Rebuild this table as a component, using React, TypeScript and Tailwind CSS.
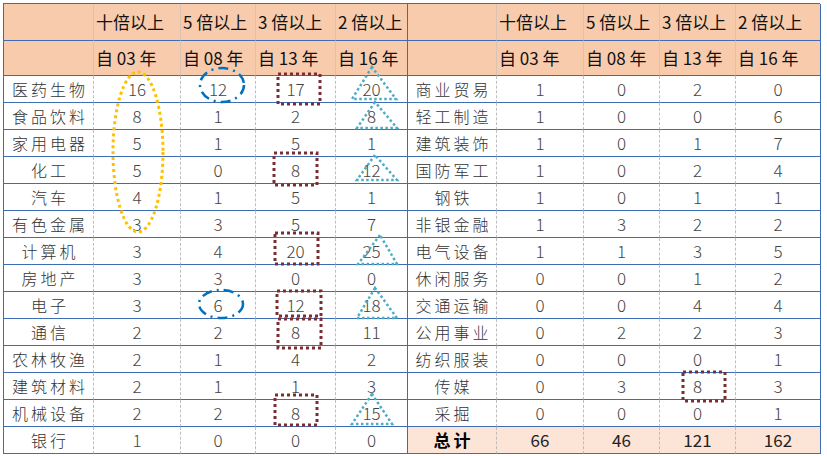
const heads = ["十倍以上", "5 倍以上", "3 倍以上", "2 倍以上"];
const years = ["自 03 年", "自 08 年", "自 13 年", "自 16 年"];

const left: [string, number[]][] = [
  ["医药生物", [16, 12, 17, 20]],
  ["食品饮料", [8, 1, 2, 8]],
  ["家用电器", [5, 1, 5, 1]],
  ["化工", [5, 0, 8, 12]],
  ["汽车", [4, 1, 5, 1]],
  ["有色金属", [3, 3, 5, 7]],
  ["计算机", [3, 4, 20, 25]],
  ["房地产", [3, 3, 0, 0]],
  ["电子", [3, 6, 12, 18]],
  ["通信", [2, 2, 8, 11]],
  ["农林牧渔", [2, 1, 4, 2]],
  ["建筑材料", [2, 1, 1, 3]],
  ["机械设备", [2, 2, 8, 15]],
  ["银行", [1, 0, 0, 0]],
];

const right: [string, number[]][] = [
  ["商业贸易", [1, 0, 2, 0]],
  ["轻工制造", [1, 0, 0, 6]],
  ["建筑装饰", [1, 0, 1, 7]],
  ["国防军工", [1, 0, 2, 4]],
  ["钢铁", [1, 0, 1, 1]],
  ["非银金融", [1, 3, 2, 2]],
  ["电气设备", [1, 1, 3, 5]],
  ["休闲服务", [0, 0, 1, 2]],
  ["交通运输", [0, 0, 4, 4]],
  ["公用事业", [0, 2, 2, 3]],
  ["纺织服装", [0, 0, 0, 1]],
  ["传媒", [0, 3, 8, 3]],
  ["采掘", [0, 0, 0, 1]],
];

const font = { fontFamily: '"Noto Sans CJK SC", "Noto Sans", sans-serif' };

// solid blue rule under every row; dashed grey between columns, solid blue on table edges
const dashR = "border-r border-r-[#BDBDBD] [border-right-style:dashed]";
const solidR = "border-r border-r-[#3F6DB5]";

function HeadCell({ text, last }: { text: string; last?: boolean }) {
  return (
    <div
      className={`flex items-center pl-[2px] bg-[#F8CBAD] border-b border-b-[#3F6DB5] text-[17px] font-normal text-[#111] whitespace-nowrap ${
        last ? solidR : "border-r border-r-[#D8C3B5]"
      }`}
    >
      {text}
    </div>
  );
}

function Label({ text }: { text: string }) {
  return (
    <div
      className={`flex items-center justify-center pl-[3px] border-b border-b-[#3F6DB5] ${dashR} text-[16px] tracking-[3px] font-light text-[#333]`}
    >
      {text}
    </div>
  );
}

function Num({ v, last }: { v: number; last?: boolean }) {
  return (
    <div
      className={`flex items-center justify-center border-b border-b-[#3F6DB5] text-[17px] font-light text-[#444] ${
        last ? solidR : dashR
      }`}
    >
      {v}
    </div>
  );
}

function TotalCell({ text, last, bold }: { text: string; last?: boolean; bold?: boolean }) {
  return (
    <div
      className={`flex items-center justify-center bg-[#FCE4D6] border-b border-b-[#3F6DB5] text-[17px] ${
        bold ? "font-bold tracking-[3px] pl-[3px] text-black" : "font-normal text-[#222]"
      } ${last ? solidR : dashR}`}
    >
      {text}
    </div>
  );
}

export default function App() {
  return (
    <div className="relative w-[827px] h-[456px] bg-white pt-[3px] pl-[3px]" style={font}>
      <div className="grid grid-cols-[90px_87px_75px_80px_72px_89px_87px_76px_76px_85px] grid-rows-[37px_35px_repeat(14,27px)] w-[817px] border-l border-t border-[#3F6DB5]">
        {/* header row 1 */}
        <HeadCell text="" />
        {heads.map((h, i) => (
          <HeadCell key={"a" + i} text={h} last={i === 3} />
        ))}
        <HeadCell text="" />
        {heads.map((h, i) => (
          <HeadCell key={"b" + i} text={h} last={i === 3} />
        ))}
        {/* header row 2 */}
        <HeadCell text="" />
        {years.map((h, i) => (
          <HeadCell key={"c" + i} text={h} last={i === 3} />
        ))}
        <HeadCell text="" />
        {years.map((h, i) => (
          <HeadCell key={"d" + i} text={h} last={i === 3} />
        ))}

        {left.map(([name, vals], r) => (
          <div key={name} className="contents">
            <Label text={name} />
            {vals.map((v, i) => (
              <Num key={i} v={v} last={i === 3} />
            ))}
            {r < right.length ? (
              <>
                <Label text={right[r][0]} />
                {right[r][1].map((v, i) => (
                  <Num key={"r" + i} v={v} last={i === 3} />
                ))}
              </>
            ) : (
              <>
                <TotalCell text="总计" bold />
                <TotalCell text="66" />
                <TotalCell text="46" />
                <TotalCell text="121" />
                <TotalCell text="162" last />
              </>
            )}
          </div>
        ))}
      </div>

      {/* hand-drawn annotations */}
      <svg className="absolute inset-0 pointer-events-none" width="827" height="456" viewBox="0 0 827 456">
        <ellipse cx="138" cy="152" rx="25" ry="80" fill="none" stroke="#FFC000" strokeWidth="3" strokeDasharray="3 3" />

        <g fill="none" stroke="#0070C0" strokeWidth="2.5" strokeDasharray="10 5 2 5">
          <ellipse cx="222" cy="85" rx="22" ry="17" />
          <ellipse cx="221" cy="304" rx="22" ry="14" />
        </g>

        <g fill="none" stroke="#7B2E32" strokeWidth="3" strokeDasharray="3 3">
          <rect x="278" y="74" width="42" height="30" />
          <rect x="274" y="153" width="43" height="32" />
          <rect x="275" y="233" width="43" height="31" />
          <rect x="277" y="291" width="44" height="25" />
          <rect x="278" y="319" width="43" height="29" />
          <rect x="275" y="395" width="42" height="30" />
          <rect x="683" y="372" width="42" height="29" />
        </g>

        <g fill="none" stroke="#4BACC6" strokeWidth="2.5" strokeDasharray="2.5 2.5">
          <polygon points="372,67 352,99 396,99" />
          <polygon points="375,102 357,128 397,128" />
          <polygon points="375,155 357,180 397,180" />
          <polygon points="380,235 358,264 397,264" />
          <polygon points="375,288 357,318 397,318" />
          <polygon points="372,394 352,424 392,424" />
        </g>
      </svg>
    </div>
  );
}
